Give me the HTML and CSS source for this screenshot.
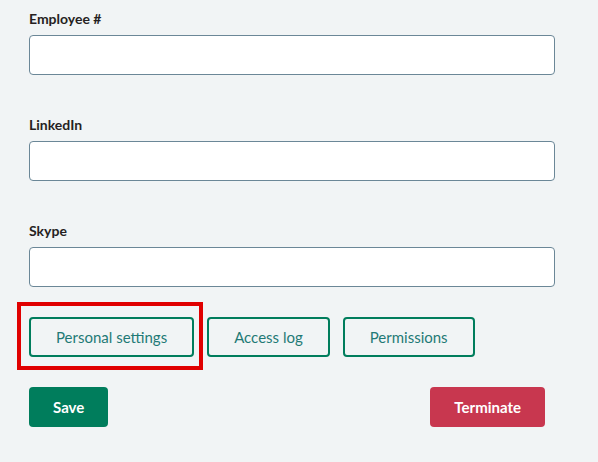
FILE: index.html
```html
<!DOCTYPE html>
<html lang="en">
<head>
    <meta charset="UTF-8">
    <meta name="viewport" content="width=device-width, initial-scale=1.0">
    <title>Employee details</title>
    <link rel="stylesheet" href="styles.css">
</head>
<body>
    <main class="form">
        <div class="field">
            <label for="employee-no">Employee #</label>
            <input id="employee-no" type="text">
        </div>
        <div class="field">
            <label for="linkedin">LinkedIn</label>
            <input id="linkedin" type="text">
        </div>
        <div class="field">
            <label for="skype">Skype</label>
            <input id="skype" type="text">
        </div>
        <div class="links">
            <button class="btn-outline highlighted">Personal settings</button>
            <button class="btn-outline">Access log</button>
            <button class="btn-outline">Permissions</button>
        </div>
        <div class="actions">
            <button class="btn btn-save">Save</button>
            <button class="btn btn-terminate">Terminate</button>
        </div>
    </main>
</body>
</html>
```

FILE: styles.css
```css
body {
    font-family: Lato, "Noto Sans", sans-serif;
    margin: 0;
    padding: 0;
    background-color: #f1f4f5;
}
.form {
    width: 526px;
    padding: 9px 0 0 29px;
}
.field {
    display: flex;
    flex-direction: column;
}
.field + .field {
    margin-top: 40px;
}
label {
    font-size: 14px;
    font-weight: bold;
    line-height: 20px;
    color: #261f1f;
    margin-bottom: 6px;
}
input {
    box-sizing: border-box;
    height: 40px;
    width: 100%;
    border: 1px solid #6b8797;
    border-radius: 4px;
    background: #fff;
    font: inherit;
    padding: 0 10px;
}
.links {
    display: flex;
    gap: 13px;
    margin-top: 30px;
}
button {
    font-family: inherit;
    font-size: 15px;
    height: 40px;
    border-radius: 4px;
    cursor: pointer;
}
.btn-outline {
    position: relative;
    box-sizing: border-box;
    padding: 0 25px;
    background: transparent;
    border: 2px solid #007d5c;
    color: #1f7a76;
}
.highlighted::after {
    content: "";
    position: absolute;
    left: -14px;
    top: -17px;
    right: -11px;
    bottom: -15px;
    border: 4px solid #e00000;
}
.actions {
    display: flex;
    justify-content: space-between;
    margin-top: 30px;
    padding-right: 10px;
}
.btn {
    border: none;
    padding: 0 24px;
    color: #fff;
    font-weight: bold;
}
.btn-save {
    background-color: #007d5c;
}
.btn-terminate {
    background-color: #c8374f;
}
```
